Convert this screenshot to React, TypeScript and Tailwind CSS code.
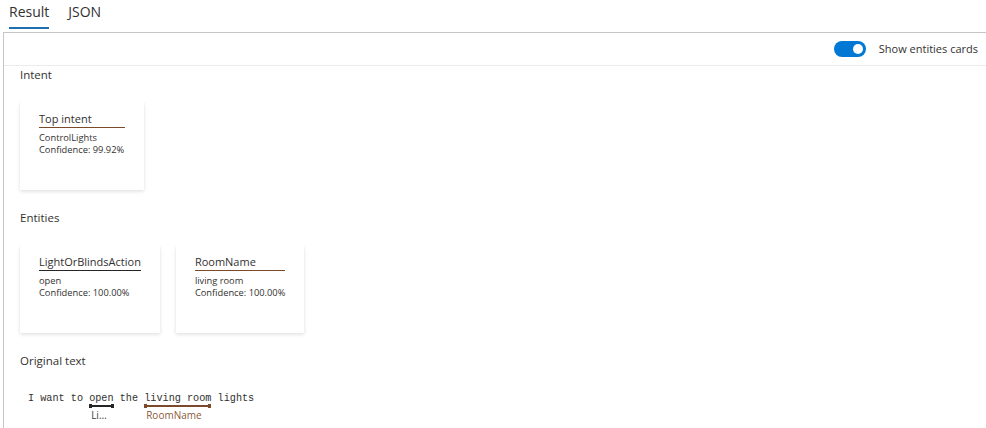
import { useState } from 'react'

interface Card {
  title: string
  lines: string[]
  color: string
}

const intentCards: Card[] = [
  { title: 'Top intent', lines: ['ControlLights', 'Confidence: 99.92%'], color: '#7a4a2a' },
]

const entityCards: Card[] = [
  { title: 'LightOrBlindsAction', lines: ['open', 'Confidence: 100.00%'], color: '#252525' },
  { title: 'RoomName', lines: ['living room', 'Confidence: 100.00%'], color: '#7a4a2a' },
]

type Token = { text: string; entity?: string; color?: string; labelColor?: string }

const tokens: Token[] = [
  { text: 'I want to ' },
  { text: 'open', entity: 'LightOrBlindsAction', color: '#252525', labelColor: '#3b3a39' },
  { text: ' the ' },
  { text: 'living room', entity: 'RoomName', color: '#7a4a2a', labelColor: '#8a5a3a' },
  { text: ' lights' },
]

function EntityCard({ card }: { card: Card }) {
  return (
    <div className="bg-white min-w-[124px] h-[88px] px-[19px] pt-[9px] shadow-[0_1.6px_3.6px_rgba(0,0,0,0.13),0_0.3px_0.9px_rgba(0,0,0,0.11)]">
      <div className="min-w-[86px] text-[11px] leading-[16px] text-[#323130] border-b" style={{ borderColor: card.color }}>
        {card.title}
      </div>
      <div className="mt-[4px] text-[9.3px] leading-[12px] text-[#323130]">
        {card.lines.map(l => <div key={l}>{l}</div>)}
      </div>
    </div>
  )
}

function SectionLabel({ children }: { children: string }) {
  return <div className="text-[11.5px] leading-[16px] text-[#323130]">{children}</div>
}

export default function App() {
  const [tab, setTab] = useState('Result')
  const [showCards, setShowCards] = useState(true)

  return (
    <div className="w-[986px] h-[428px] overflow-hidden bg-white" style={{ fontFamily: '"Segoe UI", "Open Sans", sans-serif' }}>
      {/* tabs */}
      <div className="flex h-[32px] pl-[9px] gap-[19px]">
        {['Result', 'JSON'].map(t => (
          <button key={t} onClick={() => setTab(t)}
            className="relative h-full text-[14px] leading-[20px] pt-[2px] flex items-start text-[#323130]">
            {t}
            {tab === t && <span className="absolute left-0 right-0 top-[27px] h-[2px] bg-[#1f6fb0]" />}
          </button>
        ))}
      </div>

      <div className="ml-[3px] border-l border-t border-[#c8c6c4] h-full">
        {/* toolbar */}
        <div className="h-[33px] flex items-center justify-end pr-[8px] gap-[13px] border-b border-[#edebe9]">
          <button onClick={() => setShowCards(!showCards)}
            className={`w-[32px] h-[16px] rounded-full flex items-center px-[3px] ${showCards ? 'bg-[#0078d4] justify-end' : 'bg-white border border-[#605e5c] justify-start'}`}>
            <span className={`w-[10px] h-[10px] rounded-full ${showCards ? 'bg-white' : 'bg-[#605e5c]'}`} />
          </button>
          <span className="text-[11px] leading-[16px] text-[#323130]">Show entities cards</span>
        </div>

        <div className="pl-[16px] pt-[1px]">
          <SectionLabel>Intent</SectionLabel>
          <div className="flex gap-[16px] mt-[19px]">
            {intentCards.map(c => <EntityCard key={c.title} card={c} />)}
          </div>

          <div className="mt-[20px]"><SectionLabel>Entities</SectionLabel></div>
          <div className="flex gap-[16px] mt-[19px]">
            {entityCards.map(c => <EntityCard key={c.title} card={c} />)}
          </div>

          <div className="mt-[20px]"><SectionLabel>Original text</SectionLabel></div>
          <div className="mt-[23px] pl-[8px] flex items-start text-[10.2px] leading-[13px] text-[#323130] whitespace-pre"
            style={{ fontFamily: '"Liberation Mono", monospace' }}>
            {tokens.map((tk, i) =>
              tk.entity ? (
                <span key={i} className="inline-flex flex-col">
                  <span>{tk.text}</span>
                  <span className="relative h-[2px]" style={{ background: tk.color }}>
                    <span className="absolute left-0 top-[-1px] w-[3px] h-[4px]" style={{ background: tk.color }} />
                    <span className="absolute right-0 top-[-1px] w-[3px] h-[4px]" style={{ background: tk.color }} />
                  </span>
                  <span className="w-0 min-w-full truncate pl-[2px] pr-[4px] mt-[1px] text-[10px] leading-[14px]"
                    style={{ color: tk.labelColor, fontFamily: '"Segoe UI", "Open Sans", sans-serif' }}>
                    {tk.entity}
                  </span>
                </span>
              ) : (
                <span key={i}>{tk.text}</span>
              )
            )}
          </div>
        </div>
      </div>
    </div>
  )
}
